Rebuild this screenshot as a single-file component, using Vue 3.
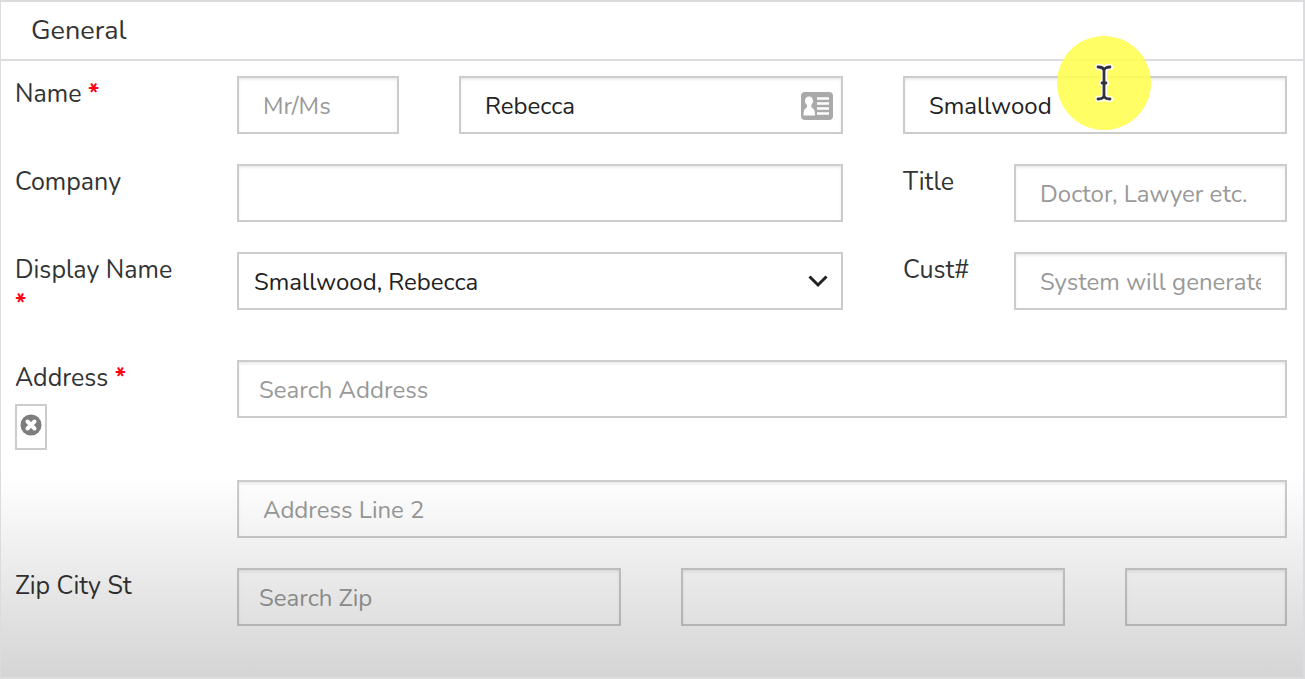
<script setup>
import { ref } from 'vue'

const salutation = ref('')
const firstName = ref('Rebecca')
const lastName = ref('Smallwood')
const company = ref('')
const title = ref('')
const displayName = ref('Smallwood, Rebecca')
const customerNo = ref('')
const address = ref('')
const address2 = ref('')
const zip = ref('')
const city = ref('')
const state = ref('')

function clearAddress() {
  address.value = ''
  address2.value = ''
}
</script>

<template>
  <form class="card" @submit.prevent>
    <h2 class="card-title">General</h2>

    <div class="card-body">
      <div class="row">
        <label class="label span-2" for="first-name">Name <span class="required">*</span></label>
        <input v-model="salutation" class="input span-2" type="text" placeholder="Mr/Ms" aria-label="Salutation" />
        <div class="field span-4">
          <input id="first-name" v-model="firstName" class="input" type="text" />
          <svg class="contact-icon" viewBox="0 0 32 28" aria-hidden="true">
            <rect width="32" height="28" rx="4" fill="#a9a9a9" />
            <path d="M8 4.500c2.500 0 4 1.800 4 4.500 0 1.800-.7 3.200-1.700 4v2l2.700 2.500c.7.800 1 3.500 1 6H2.500c0-2.500.2-5.200 1-6L6 15v-2c-1.200-.8-2-2.200-2-4 0-2.700 1.500-4.500 4-4.500z" fill="#fff" />
            <path d="M16 6.500h12M16 11.500h12M16 16.500h12M16 21.500h12" stroke="#fff" stroke-width="2.500" />
          </svg>
        </div>
        <div class="field span-4">
          <input v-model="lastName" class="input" type="text" aria-label="Last name" />
          <div class="pointer" aria-hidden="true">
            <svg class="pointer-icon" viewBox="0 0 20 38">
              <g fill="none" stroke-linecap="round" stroke-linejoin="round">
                <path d="M4 3c3 0 6 1 6 4 0-3 3-4 6-4M10 7v24M4 35c3 0 6-1 6-4 0 3 3 4 6 4M8 19h4" stroke="#fff" stroke-width="6" />
                <path d="M4 3c3 0 6 1 6 4 0-3 3-4 6-4M10 7v24M4 35c3 0 6-1 6-4 0 3 3 4 6 4M8 19h4" stroke="#33313a" stroke-width="2.800" />
              </g>
            </svg>
          </div>
        </div>
      </div>

      <div class="row">
        <label class="label span-2" for="company">Company</label>
        <input id="company" v-model="company" class="input span-6" type="text" />
        <label class="label span-1" for="title">Title</label>
        <input id="title" v-model="title" class="input span-3" type="text" placeholder="Doctor, Lawyer etc." />
      </div>

      <div class="row">
        <label class="label span-2" for="display-name">Display Name <span class="required">*</span></label>
        <div class="field span-6">
          <select id="display-name" v-model="displayName" class="input select">
            <option>Smallwood, Rebecca</option>
            <option>Rebecca Smallwood</option>
          </select>
          <svg class="chevron" viewBox="0 0 20 14" aria-hidden="true">
            <path d="M1.500 2.500 10 11l8.500-8.500" fill="none" stroke="#222" stroke-width="3" />
          </svg>
        </div>
        <label class="label span-1" for="customer-no">Cust#</label>
        <input id="customer-no" v-model="customerNo" class="input span-3" type="text" placeholder="System will generate" />
      </div>

      <div class="row">
        <div class="span-2">
          <label class="label" for="address">Address <span class="required">*</span></label>
          <button class="clear" type="button" aria-label="Clear address" @click="clearAddress">
            <svg class="clear-icon" viewBox="0 0 22 22" aria-hidden="true">
              <circle cx="11" cy="11" r="10.500" fill="#7d7d7d" />
              <path d="M7.500 7.500l7 7M14.500 7.500l-7 7" stroke="#fff" stroke-width="4" stroke-linecap="round" />
            </svg>
          </button>
        </div>
        <input id="address" v-model="address" class="input search span-10" type="text" placeholder="Search Address" />
      </div>

      <div class="row">
        <input v-model="address2" class="input span-10 indent" type="text" placeholder="Address Line 2" aria-label="Address line 2" />
      </div>

      <div class="row">
        <label class="label span-2" for="zip">Zip City St</label>
        <input id="zip" v-model="zip" class="input search span-4" type="text" placeholder="Search Zip" />
        <input v-model="city" class="input span-4" type="text" aria-label="City" />
        <input v-model="state" class="input span-2" type="text" aria-label="State" />
      </div>
    </div>

    <div class="shade" aria-hidden="true"></div>
  </form>
</template>

<style>
body {
  background: #fff;
}
</style>

<style scoped>
.card,
.card * {
  box-sizing: border-box;
}

.card {
  position: relative;
  min-height: 100vh;
  overflow: hidden;
  border: 2px solid #dcdcde;
  border-left-width: 1px;
  background: #fff;
  color: #333;
  font-family: Nunito, Lato, "Noto Sans", sans-serif;
  font-size: 25px;
}

.card-title {
  margin: 0;
  padding: 10px 30px;
  border-bottom: 2px solid #dcdcdc;
  font-size: 27px;
  font-weight: 400;
  line-height: 37px;
}

.card-body {
  display: grid;
  gap: 30px;
  padding: 15px 16px 48px 14px;
}

.row {
  display: grid;
  grid-template-columns: repeat(12, minmax(0, 1fr));
  column-gap: 60px;
  align-items: start;
}

.span-1 { grid-column: span 1; }
.span-2 { grid-column: span 2; }
.span-3 { grid-column: span 3; }
.span-4 { grid-column: span 4; }
.span-6 { grid-column: span 6; }
.span-10 { grid-column: span 10; }
.indent { grid-column: 3 / -1; }

.label {
  display: block;
  padding: 1px 0 9px;
  line-height: 34px;
}

.required {
  color: #f01;
  font-weight: 700;
}

.field {
  position: relative;
}

.input {
  width: 100%;
  height: 58px;
  margin: 0;
  padding: 1px 24px 0;
  border: 2px solid #ccc;
  border-radius: 0;
  outline: 0;
  background: #fff;
  box-shadow: inset 0 2px 3px rgba(0, 0, 0, 0.08);
  color: #222;
  font: inherit;
  font-size: 24px;
}

.input::placeholder {
  color: #999;
  opacity: 1;
}

.search {
  padding: 1px 20px 0;
}

.select {
  display: block;
  padding: 1px 48px 0 15px;
  box-shadow: none;
  appearance: none;
}

.chevron {
  position: absolute;
  top: 22px;
  right: 15px;
  width: 20px;
  height: 14px;
  pointer-events: none;
}

.contact-icon {
  position: absolute;
  top: 16px;
  right: 10px;
  width: 32px;
  height: 28px;
}

.pointer {
  position: absolute;
  top: -40px;
  left: 40%;
  display: grid;
  width: 94px;
  height: 94px;
  place-items: center;
}

.pointer {
  pointer-events: none;
}

.pointer::before {
  content: "";
  grid-area: 1 / 1;
  width: 94px;
  height: 94px;
  border-radius: 50%;
  background: rgba(255, 255, 80, 0.88);
}

.pointer-icon {
  position: relative;
  grid-area: 1 / 1;
  width: 20px;
  height: 38px;
}

.clear {
  display: grid;
  width: 32px;
  height: 46px;
  padding: 0 0 4px;
  place-items: center;
  border: 2px solid #ccc;
  background: #fff;
}

.clear-icon {
  width: 22px;
  height: 22px;
}

.shade {
  position: absolute;
  right: -2px;
  bottom: -2px;
  left: -1px;
  height: 204px;
  background: linear-gradient(rgba(0, 0, 0, 0), rgba(0, 0, 0, 0.17));
  pointer-events: none;
}
</style>
